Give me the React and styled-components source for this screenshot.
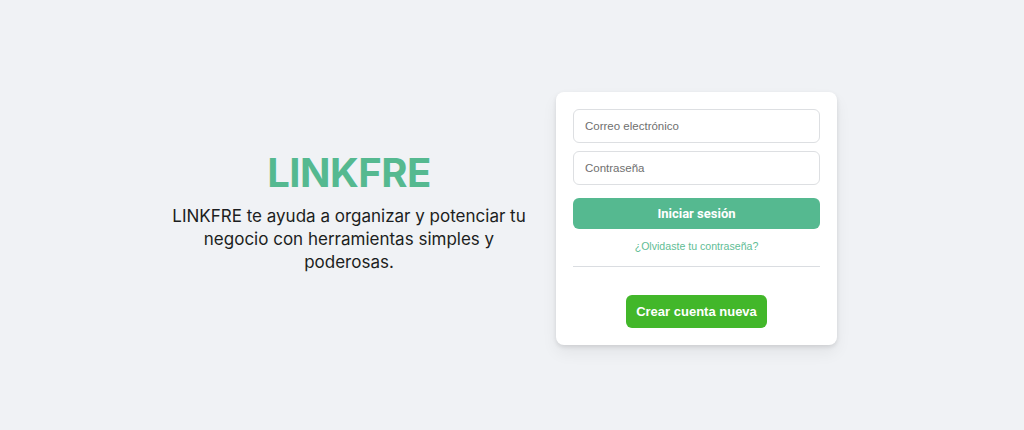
import React from "react";
import styled, { createGlobalStyle } from "styled-components";

const GlobalStyle = createGlobalStyle`
  body {
    margin: 0;
    background: #f0f2f5;
    font-family: "Liberation Sans", Arial, sans-serif;
  }
`;

const Page = styled.div`
  display: flex;
  justify-content: center;
  align-items: center;
  height: 430px;
  padding-right: 18px;
  box-sizing: border-box;
`;

const Intro = styled.div`
  display: flex;
  flex-direction: column;
  align-items: center;
  width: 360px;
  margin-right: 27px;
  margin-top: -8px;
  text-align: center;
`;

const Brand = styled.h1`
  margin: 0 0 8px;
  font-family: Inter, sans-serif;
  font-size: 40px;
  font-weight: 700;
  color: #55b990;
  letter-spacing: -0.5px;
`;

const Tagline = styled.p`
  margin: 0;
  font-family: Inter, sans-serif;
  font-size: 17px;
  line-height: 23px;
  color: #1c1e21;
`;

const Card = styled.form`
  display: flex;
  flex-direction: column;
  width: 281px;
  padding: 17px;
  box-sizing: border-box;
  background: #fff;
  border-radius: 8px;
  box-shadow: 0 2px 4px rgba(0, 0, 0, 0.1), 0 8px 16px rgba(0, 0, 0, 0.06);
  margin-top: 7px;
`;

const Field = styled.input`
  box-sizing: border-box;
  height: 34px;
  margin-bottom: 8px;
  padding: 0 11px;
  border: 1px solid #dddfe2;
  border-radius: 6px;
  font-family: "Liberation Sans", Arial, sans-serif;
  font-size: 11.5px;
  color: #1c1e21;
  outline: none;

  &::placeholder {
    color: #6f6f6f;
  }
`;

const Button = styled.button`
  border: none;
  border-radius: 6px;
  color: #fff;
  font-family: ${(p) =>
    p.$create
      ? `"Liberation Sans", Arial, sans-serif`
      : `Roboto, "Liberation Sans", sans-serif`};
  font-weight: 700;
  font-size: 13px;
  white-space: nowrap;
  cursor: pointer;
  background: ${(p) => (p.$create ? "#42b72a" : "#55b990")};
  height: ${(p) => (p.$create ? "33px" : "31px")};
  padding: 0;
`;

const LoginButton = styled(Button)`
  margin-top: 5px;
`;

const Forgot = styled.a`
  align-self: center;
  margin-top: 11px;
  font-size: 10.6px;
  line-height: 12px;
  color: #5fbd95;
  text-decoration: none;
`;

const Divider = styled.hr`
  width: 100%;
  margin: 14px 0 28px;
  border: none;
  border-top: 1px solid #dadde1;
`;

const CreateButton = styled(Button)`
  align-self: center;
  width: 141px;
`;

export default function App() {
  return (
    <>
      <GlobalStyle />
      <Page>
        <Intro>
          <Brand>LINKFRE</Brand>
          <Tagline>
            LINKFRE te ayuda a organizar y potenciar tu negocio con
            herramientas simples y poderosas.
          </Tagline>
        </Intro>
        <Card onSubmit={(e) => e.preventDefault()}>
          <Field type="email" placeholder="Correo electrónico" />
          <Field type="password" placeholder="Contraseña" />
          <LoginButton type="submit">Iniciar sesión</LoginButton>
          <Forgot href="#">¿Olvidaste tu contraseña?</Forgot>
          <Divider />
          <CreateButton $create type="button">
            Crear cuenta nueva
          </CreateButton>
        </Card>
      </Page>
    </>
  );
}
